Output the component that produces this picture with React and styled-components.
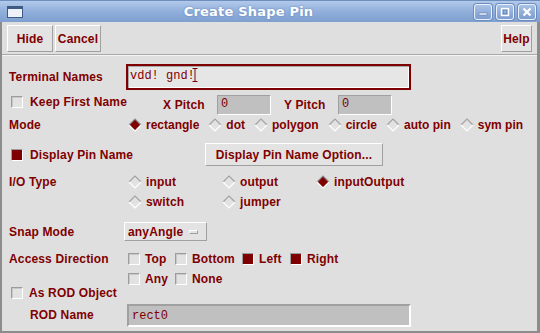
import React from 'react';
import styled, { createGlobalStyle } from 'styled-components';

const RED = '#7f0000';
const BG = '#dfdfdf';

const Global = createGlobalStyle`
  html, body { margin: 0; padding: 0; background: #ffffff; }
  body { width: 540px; height: 333px; overflow: hidden; }
  * { box-sizing: border-box; }
`;

const Window = styled.div`
  width: 540px;
  height: 333px;
  display: flex;
  flex-direction: column;
  font-family: "Liberation Sans", Arial, sans-serif;
  font-weight: bold;
  font-size: 12px;
  letter-spacing: 0.15px;
  color: ${RED};
  overflow: hidden;
`;

const TitleBar = styled.div`
  height: 22px;
  flex-shrink: 0;
  display: flex;
  align-items: center;
  padding: 0 4px 0 7px;
  background: linear-gradient(#b2c9ea, #8eadda 55%, #7f9fcf);
  border-top: 1px solid #6f8fbf;
`;

const Title = styled.div`
  flex: 1;
  text-align: center;
  font-family: "DejaVu Sans", sans-serif;
  font-weight: bold;
  font-size: 13px;
  color: #ffffff;
  letter-spacing: 0.2px;
  text-shadow: 0 0 2px #5d7fb3;
`;

const WinButtons = styled.div`
  display: flex;
  gap: 4px;
`;

const WinBtn = styled.div`
  width: 18px;
  height: 16px;
  border: 1px solid #eaf1fb;
  border-radius: 3px;
  background: linear-gradient(#a9c2e6, #7d9dcf);
  display: flex;
  align-items: center;
  justify-content: center;
  box-shadow: 0 0 0 1px #6d8dc0;
`;

const Body = styled.div`
  flex: 1;
  display: flex;
  flex-direction: column;
  background: ${BG};
  border-left: 2px solid #8c8c8c;
  border-right: 3px solid #8c8c8c;
  border-bottom: 2px solid #8c8c8c;
`;

const Toolbar = styled.div`
  height: 33px;
  display: flex;
  align-items: flex-start;
  gap: 2px;
  padding: 3px 5px 0 5px;
  border-bottom: 1px solid #a8a8a8;
  box-shadow: 0 1px 0 #f4f4f4;
`;

const Spacer = styled.div`
  flex: 1;
`;

const ToolButton = styled.button`
  width: ${p => p.$w}px;
  height: 27px;
  padding: 0;
  font: inherit;
  letter-spacing: inherit;
  color: ${RED};
  background: #e3e3e3;
  border: 1px solid;
  border-color: #ffffff #a0a0a0 #a0a0a0 #ffffff;
`;

const Form = styled.div`
  display: flex;
  flex-direction: column;
  padding-left: 7px;
`;

const Row = styled.div`
  display: flex;
  align-items: center;
  height: ${p => p.$h}px;
  margin-top: ${p => p.$mt || 0}px;
  flex-shrink: 0;
`;

const Label = styled.div`
  width: ${p => p.$w || 117}px;
  padding-left: ${p => p.$pl || 0}px;
  flex-shrink: 0;
  white-space: nowrap;
`;

const MonoField = styled.div`
  width: ${p => p.$w}px;
  height: ${p => p.$h}px;
  font-family: "Liberation Mono", "Courier New", monospace;
  font-weight: normal;
  font-size: 12px;
  letter-spacing: 0;
  line-height: 14px;
  color: ${RED};
  padding: 1px ${p => (p.$focus ? 2 : 3)}px;
  display: flex;
  align-items: flex-start;
  background: ${p => (p.$focus ? '#e6e6e6' : '#c0c0c0')};
  border: ${p => (p.$focus ? `2px solid ${RED}` : `${p.$bw || 1}px solid`)};
  border-color: ${p => (p.$focus ? RED : '#a0a0a0 #ffffff #ffffff #a0a0a0')};
  box-shadow: ${p => (p.$focus ? 'inset 1px 1px 0 #a8a8a8, inset -1px -1px 0 #ffffff' : 'none')};
`;

const CheckGroup = styled.div`
  display: flex;
  align-items: center;
  gap: ${p => p.$gap || 7}px;
  width: ${p => (p.$w ? `${p.$w}px` : 'auto')};
  padding-left: ${p => p.$pl || 0}px;
  flex-shrink: 0;
  align-self: ${p => (p.$top ? 'flex-start' : 'center')};
  margin-top: ${p => p.$mt || 0}px;
  white-space: nowrap;
`;

const Box = styled.span`
  width: 12px;
  height: 12px;
  flex-shrink: 0;
  background: ${p => (p.$on ? RED : '#e2e2e2')};
  border: 1px solid;
  border-color: #9c9c9c #ffffff #ffffff #9c9c9c;
  box-shadow: ${p => (p.$on ? 'none' : 'inset 1px 1px 0 #c8c8c8')};
`;

const PitchLabel = styled.div`
  width: 54px;
  margin-left: ${p => p.$ml || 0}px;
  flex-shrink: 0;
`;

const Options = styled.div`
  display: flex;
  align-items: center;
  gap: ${p => p.$gap || 9}px;
  padding-left: 2px;
  letter-spacing: 0;
`;

const OptGrid = styled.div`
  display: grid;
  grid-template-columns: ${p => p.$cols};
  align-items: center;
  padding-left: 2px;
`;

const Option = styled.label`
  display: flex;
  align-items: center;
  gap: 4px;
  white-space: nowrap;
`;

const BoxOption = styled.label`
  display: flex;
  align-items: center;
  gap: 5px;
  white-space: nowrap;
`;

const PushButton = styled.button`
  width: 178px;
  height: 23px;
  padding: 0;
  font: inherit;
  letter-spacing: inherit;
  color: ${RED};
  background: #e3e3e3;
  border: 1px solid;
  border-color: #ffffff #a0a0a0 #a0a0a0 #ffffff;
`;

const Dropdown = styled.div`
  width: 83px;
  height: 19px;
  display: flex;
  align-items: center;
  justify-content: space-between;
  padding: 0 8px 0 3px;
  background: #e3e3e3;
  border: 1px solid;
  border-color: #ffffff #a0a0a0 #a0a0a0 #ffffff;
  margin-left: -2px;
`;

const DropMark = styled.span`
  width: 9px;
  height: 4px;
  border: 1px solid;
  border-color: #ffffff #a0a0a0 #a0a0a0 #ffffff;
  background: #e3e3e3;
`;

const Diamond = ({ on }) => (
  <svg width="14" height="14" viewBox="0 0 14 14" style={{ flexShrink: 0 }}>
    <polygon points="7,1 13,7 7,13 1,7" fill={on ? RED : '#e2e2e2'} />
    <polyline points="1,7 7,1 13,7" fill="none" stroke={on ? '#8a8a8a' : '#a2a2a2'} strokeWidth="1.2" />
    <polyline points="1,7 7,13 13,7" fill="none" stroke="#ffffff" strokeWidth="1.2" />
  </svg>
);

const Cursor = () => (
  <svg width="6" height="14" viewBox="0 0 6 14" style={{ marginLeft: -3, marginTop: 1 }}>
    <path d="M0.5 0.5H5.5M3 0.5V13.5M0.5 13.5H5.5" stroke={RED} strokeWidth="1" fill="none" />
  </svg>
);

export default function App() {
  return (
    <>
      <Global />
      <Window>
        <TitleBar>
          <svg width="16" height="12" viewBox="0 0 16 12">
            <rect x="0.5" y="0.5" width="15" height="11" fill="#eef2f8" stroke="#3d5a86" />
            <rect x="1" y="1" width="14" height="2" fill="#3d5a86" />
          </svg>
          <Title>Create Shape Pin</Title>
          <WinButtons>
            <WinBtn>
              <svg width="10" height="10" viewBox="0 0 10 10">
                <rect x="1" y="6" width="8" height="2" fill="#ffffff" stroke="#5b7bb0" strokeWidth="0.6" />
              </svg>
            </WinBtn>
            <WinBtn>
              <svg width="10" height="10" viewBox="0 0 10 10">
                <rect x="1.5" y="1.5" width="7" height="7" fill="none" stroke="#ffffff" strokeWidth="1.4" />
                <rect x="3.2" y="3.2" width="3.6" height="3.6" fill="none" stroke="#5b7bb0" strokeWidth="0.6" />
              </svg>
            </WinBtn>
            <WinBtn>
              <svg width="10" height="10" viewBox="0 0 10 10">
                <path d="M1.5 1.5L8.5 8.5M8.5 1.5L1.5 8.5" stroke="#ffffff" strokeWidth="2.2" />
              </svg>
            </WinBtn>
          </WinButtons>
        </TitleBar>
        <Body>
          <Toolbar>
            <ToolButton $w={46}>Hide</ToolButton>
            <ToolButton $w={46}>Cancel</ToolButton>
            <Spacer />
            <ToolButton $w={31}>Help</ToolButton>
          </Toolbar>
          <Form>
            <Row $h={33} $mt={5}>
              <Label>Terminal Names</Label>
              <MonoField $w={285} $h={26} $focus>
                <span style={{ marginTop: 2 }}>vdd! gnd!</span>
                <Cursor />
              </MonoField>
            </Row>
            <Row $h={23}>
              <CheckGroup $w={154} $pl={2} $top $mt={2}>
                <Box />
                <span>Keep First Name</span>
              </CheckGroup>
              <PitchLabel>X Pitch</PitchLabel>
              <MonoField $w={54} $h={20}>0</MonoField>
              <PitchLabel $ml={13}>Y Pitch</PitchLabel>
              <MonoField $w={54} $h={20}>0</MonoField>
            </Row>
            <Row $h={18}>
              <Label>Mode</Label>
              <Options>
                <Option><Diamond on />rectangle</Option>
                <Option><Diamond />dot</Option>
                <Option><Diamond />polygon</Option>
                <Option><Diamond />circle</Option>
                <Option><Diamond />auto pin</Option>
                <Option><Diamond />sym pin</Option>
              </Options>
            </Row>
            <Row $h={23} $mt={9}>
              <CheckGroup $w={196} $pl={2}>
                <Box $on />
                <span>Display Pin Name</span>
              </CheckGroup>
              <PushButton>Display Pin Name Option...</PushButton>
            </Row>
            <Row $h={16} $mt={8}>
              <Label>I/O Type</Label>
              <OptGrid $cols="94px 94px auto">
                <Option><Diamond />input</Option>
                <Option><Diamond />output</Option>
                <Option><Diamond on />inputOutput</Option>
              </OptGrid>
            </Row>
            <Row $h={16} $mt={4}>
              <Label />
              <OptGrid $cols="94px 94px auto">
                <Option><Diamond />switch</Option>
                <Option><Diamond />jumper</Option>
              </OptGrid>
            </Row>
            <Row $h={19} $mt={12}>
              <Label>Snap Mode</Label>
              <Dropdown>
                <span>anyAngle</span>
                <DropMark />
              </Dropdown>
            </Row>
            <Row $h={16} $mt={10}>
              <Label>Access Direction</Label>
              <OptGrid $cols="47px 67px 48px auto">
                <BoxOption><Box />Top</BoxOption>
                <BoxOption><Box />Bottom</BoxOption>
                <BoxOption><Box $on />Left</BoxOption>
                <BoxOption><Box $on />Right</BoxOption>
              </OptGrid>
            </Row>
            <Row $h={15} $mt={4}>
              <Label />
              <OptGrid $cols="47px 67px">
                <BoxOption><Box />Any</BoxOption>
                <BoxOption><Box />None</BoxOption>
              </OptGrid>
            </Row>
            <Row $h={13}>
              <CheckGroup $pl={2} $gap={6}>
                <Box />
                <span>As ROD Object</span>
              </CheckGroup>
            </Row>
            <Row $h={22} $mt={5}>
              <Label $w={118} $pl={21}>ROD Name</Label>
              <MonoField $w={284} $h={23} $bw={2}>
                <span style={{ marginTop: 2 }}>rect0</span>
              </MonoField>
            </Row>
          </Form>
        </Body>
      </Window>
    </>
  );
}
